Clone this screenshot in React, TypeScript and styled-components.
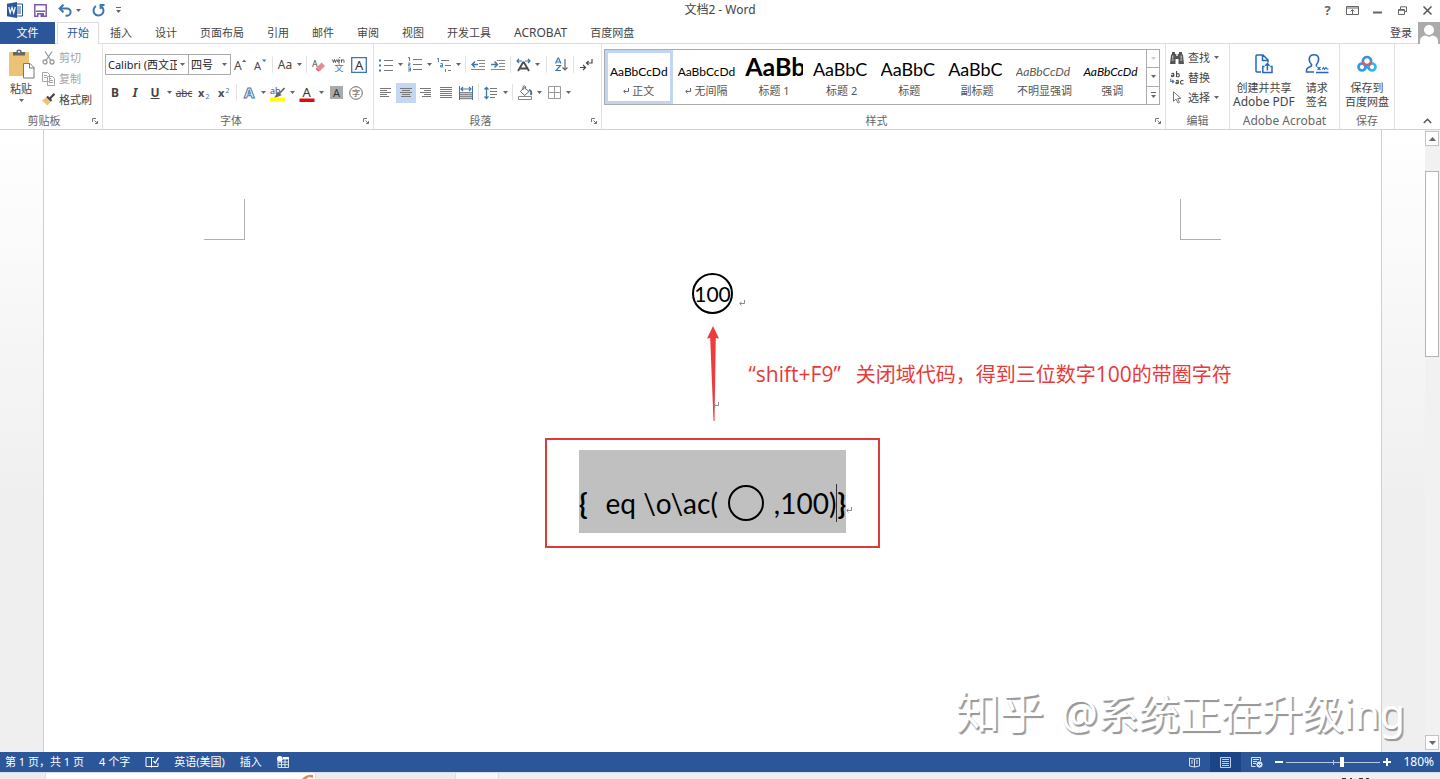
import React from 'react';
import styled, { createGlobalStyle, css } from 'styled-components';

const ui = '"Noto Sans", "Noto Sans CJK SC", sans-serif';
const calibri = 'Lato, "Noto Sans CJK SC", sans-serif';
const blue = '#2b579a';
const accent = '#3f76ad';
const ink = '#4a4a4a';

const GlobalStyle = createGlobalStyle`
  *, *::before, *::after { box-sizing: border-box; }
  body { margin: 0; background: #fff; font-family: ${ui}; font-size: 11px; line-height: 14px; color: #444; }
  button, select, input { font: inherit; color: inherit; margin: 0; }
  button { padding: 0; border: 0; background: none; white-space: nowrap; }
  svg { display: block; flex: none; }
`;

const Window = styled.div`
  min-height: 100vh;
  display: flex;
  flex-direction: column;
  overflow: hidden;
`;

/* ---------- title bar ---------- */

const TitleBar = styled.header`
  display: grid;
  grid-template-columns: 1fr auto 1fr;
  align-items: start;
  height: 22px;
`;

const QuickAccess = styled.div`
  display: flex;
  align-items: center;
  gap: 11px;
  padding-left: 7px;
  height: 20px;
`;

const QuickButton = styled.button`
  display: flex;
  align-items: center;
  gap: 4px;
  height: 18px;
`;

const Title = styled.h1`
  margin: 0;
  font-size: 12px;
  font-weight: 400;
  line-height: 20px;
`;

const WindowControls = styled.div`
  display: flex;
  justify-content: flex-end;
`;

const WindowButton = styled.button`
  width: 25px;
  height: 20px;
  display: flex;
  align-items: center;
  justify-content: center;
  font-size: 13px;
  font-weight: 700;
  color: #666;
`;

/* ---------- tabs ---------- */

const TabBar = styled.nav`
  display: flex;
  align-items: stretch;
  height: 22px;
  border-bottom: 1px solid #dcdcdc;
`;

const FileTab = styled.button`
  width: 55px;
  height: 22px;
  margin-right: 2px;
  background: ${blue};
  color: #fff;
`;

const Tab = styled.button<{ $active?: boolean; $latin?: boolean }>`
  padding: 0 11px;
  margin-right: 1px;
  height: 22px;
  font-size: ${p => (p.$latin ? 12 : 11)}px;
  ${p => p.$active && css`
    padding: 0 9px 2px;
    margin-right: 0;
    color: ${blue};
    background: #fff;
    border: 1px solid #dcdcdc;
    border-bottom: 0;
  `}
`;

const Account = styled.button`
  display: flex;
  align-items: center;
  gap: 6px;
  margin-left: auto;
  height: 22px;
`;

/* ---------- ribbon ---------- */

const Ribbon = styled.section`
  display: flex;
  height: 86px;
  border-bottom: 1px solid #d2d2d2;
`;

const Group = styled.section<{ $width?: number }>`
  ${p => (p.$width ? `flex: none; width: ${p.$width}px;` : 'flex: 1; min-width: 0;')}
  display: flex;
  flex-direction: column;
  padding-top: 3px;
  border-right: 1px solid #e3e3e3;
`;

const GroupBody = styled.div`
  flex: 1;
  display: flex;
  padding: 0 2px;
`;

const GroupFooter = styled.footer`
  display: flex;
  align-items: center;
  height: 16px;
  color: #666;
`;

const GroupName = styled.span<{ $latin?: boolean }>`
  flex: 1;
  text-align: center;
  font-size: ${p => (p.$latin ? 12 : 11)}px;
`;

const Launcher = styled.button`
  width: 14px;
  height: 14px;
  display: flex;
  align-items: center;
  justify-content: center;
`;

const ToolRows = styled.div`
  display: flex;
  flex-direction: column;
  gap: 7px;
  padding-top: 7px;
`;

const ToolRow = styled.div`
  display: flex;
  align-items: center;
  height: 21px;
`;

const Tool = styled.button<{ $active?: boolean; $bold?: boolean; $italic?: boolean; $line?: string }>`
  width: 20px;
  height: 20px;
  display: flex;
  align-items: center;
  justify-content: center;
  font-size: 12px;
  font-weight: ${p => (p.$bold ? 700 : 400)};
  font-style: ${p => (p.$italic ? 'italic' : 'normal')};
  text-decoration: ${p => p.$line || 'none'};
  background: ${p => (p.$active ? '#c5d6f2' : 'transparent')};
`;

const CaretButton = styled.button`
  width: 9px;
  height: 20px;
  display: flex;
  align-items: center;
  justify-content: center;
`;

const Separator = styled.span<{ $wide?: boolean }>`
  width: 1px;
  height: 17px;
  margin: 0 ${p => (p.$wide ? 4 : 2)}px;
  background: #e3e3e3;
`;

const Combo = styled.label<{ $width: number }>`
  position: relative;
  width: ${p => p.$width}px;
  height: 21px;
  margin-right: -1px;
  border: 1px solid #ababab;
  select {
    appearance: none;
    width: 100%;
    height: 19px;
    padding: 0 11px 0 2px;
    border: 0;
    background: #fff;
    color: #222;
    overflow: hidden;
  }
  svg {
    position: absolute;
    right: 3px;
    top: 8px;
    pointer-events: none;
  }
`;

const PasteButton = styled.button`
  width: 38px;
  display: flex;
  flex-direction: column;
  align-items: center;
  gap: 3px;
  padding-top: 2px;
`;

const CommandList = styled.div<{ $tight?: boolean }>`
  display: flex;
  flex-direction: column;
  gap: ${p => (p.$tight ? 5 : 6)}px;
  padding: 3px 0 0 2px;
`;

const Command = styled.button`
  display: flex;
  align-items: center;
  gap: 4px;
  height: 15px;
  &:disabled { color: #a3a3a3; }
`;

const CommandRow = styled.div`
  display: flex;
  align-items: center;
  gap: 2px;
  height: 15px;
`;

const BigButton = styled.button<{ $grow?: boolean }>`
  display: flex;
  flex-direction: column;
  align-items: center;
  padding: 7px 1px 0;
  margin-right: ${p => (p.$grow ? 0 : 8)}px;
  flex: ${p => (p.$grow ? 1 : 'none')};
`;

const BigLabel = styled.span<{ $latin?: boolean }>`
  font-size: ${p => (p.$latin ? 12 : 11)}px;
  line-height: 14px;
  &:first-of-type { margin-top: 7px; }
`;

const Gallery = styled.div`
  flex: 1;
  min-width: 0;
  display: flex;
  height: 56px;
  margin: 2px 3px 0 0;
  border: 1px solid #ababab;
`;

const StyleCard = styled.button<{ $selected?: boolean }>`
  flex: 1 1 0;
  min-width: 0;
  padding: ${p => (p.$selected ? 0 : 3)}px;
  border: ${p => (p.$selected ? '3px solid #c2d5f2' : '0')};
  display: flex;
  flex-direction: column;
  align-items: center;
`;

const Preview = styled.span`
  align-self: stretch;
  flex: none;
  height: 31px;
  margin: 0 2px;
  overflow: hidden;
  font: 24px/28px ${calibri};
  text-align: left;
  color: #000;
`;

const Sample = styled.span<{ $size: number; $bold?: boolean; $italic?: boolean; $color?: string }>`
  font-size: ${p => p.$size}px;
  line-height: 10px;
  font-weight: ${p => (p.$bold ? 700 : 400)};
  font-style: ${p => (p.$italic ? 'italic' : 'normal')};
  color: ${p => p.$color || '#000'};
`;

const StyleName = styled.span`
  display: flex;
  align-items: center;
  gap: 3px;
  color: #555;
`;

const GalleryNav = styled.div`
  width: 13px;
  display: flex;
  flex-direction: column;
  border-left: 1px solid #ababab;
`;

const GalleryButton = styled.button`
  flex: 1;
  display: flex;
  align-items: center;
  justify-content: center;
  & + & { border-top: 1px solid #ababab; }
`;

const RibbonEnd = styled.div`
  width: 45px;
  display: flex;
  align-items: flex-end;
  justify-content: flex-end;
  padding: 0 8px 5px 0;
`;

/* ---------- document ---------- */

const Workspace = styled.main`
  position: relative;
  flex: 1;
  display: flex;
  background: linear-gradient(#fff, #efefef 60%);
`;

const Page = styled.article`
  flex: 1;
  min-width: 0;
  margin: 0 43px;
  background: #fff;
  border: solid #cfcfcf;
  border-width: 0 1px;
  display: flex;
  flex-direction: column;
  align-items: center;
  font-family: ${calibri};
  color: #000;
`;

const MarginMarks = styled.div`
  align-self: stretch;
  display: flex;
  justify-content: space-between;
  padding: 69px 160px 33px;
`;

const MarginMark = styled.span<{ $side: 'left' | 'right' }>`
  width: 41px;
  height: 41px;
  border-bottom: 1px solid #b0b0b0;
  border-${p => (p.$side === 'left' ? 'right' : 'left')}: 1px solid #b0b0b0;
`;

const Enclosed = styled.p`
  position: relative;
  margin: 0;
  width: 41px;
  height: 41px;
  border: 2px solid #000;
  border-radius: 50%;
  display: flex;
  align-items: center;
  justify-content: center;
  font-size: 21px;
  line-height: 40px;
`;

const ReturnMark = styled.span<{ $left: number; $top: number }>`
  position: absolute;
  left: ${p => p.$left}px;
  top: ${p => p.$top}px;
`;

const Explanation = styled.div`
  align-self: stretch;
  display: grid;
  grid-template-columns: 1fr 12px 1fr;
  align-items: center;
  padding: 12px 0 17px;
`;

const ArrowHolder = styled.div`
  position: relative;
  grid-column: 2;
`;

const Note = styled.p`
  margin: 0;
  padding: 2px 0 0 30px;
  font: 20px/28px "Open Sans", "Noto Sans CJK SC", sans-serif;
  color: #e8393a;
  white-space: nowrap;
`;

const NoteLatin = styled.span`
  font-size: 21px;
`;

const NoteKeys = styled(NoteLatin)`
  margin-right: 15px;
`;

const RedFrame = styled.div`
  padding: 10px 32px 13px;
  border: 2px solid #dd3a3a;
`;

const FieldCode = styled.p`
  position: relative;
  margin: 0;
  width: 267px;
  height: 83px;
  background: #c0c0c0;
  display: flex;
  align-items: center;
  padding-top: 23px;
  font-size: 28px;
  line-height: 40px;
  white-space: pre;
`;

const Spread = styled.span`
  flex: 1;
  display: flex;
  align-items: center;
  justify-content: space-between;
  padding-left: 18px;
`;

const Ring = styled.span`
  width: 36px;
  height: 36px;
  border: 2px solid #000;
  border-radius: 50%;
`;

const TextCursor = styled.span`
  width: 1px;
  height: 38px;
  background: #333;
`;

const ScrollBar = styled.aside`
  width: 15px;
  display: flex;
  flex-direction: column;
  align-items: stretch;
  padding: 1px 1px 2px 0;
  background: #f1f1f1;
`;

const ScrollButton = styled.button`
  height: 15px;
  display: flex;
  align-items: center;
  justify-content: center;
  background: #fff;
  border: 1px solid #c4c4c4;
`;

const ScrollTrack = styled.div`
  flex: 1;
  padding-top: 25px;
`;

const ScrollThumb = styled.div`
  height: 33%;
  background: #fff;
  border: 1px solid #b4b4b4;
`;

const Watermark = styled.p`
  position: absolute;
  right: 35px;
  bottom: 10px;
  margin: 0;
  font: 41px/58px "Noto Sans", "Noto Sans CJK SC", sans-serif;
  color: #fff;
  text-shadow: 1px 2px 1px #999, 2px 2px 0 #b0b0b0;
  white-space: nowrap;
`;

const SiteName = styled.span`
  margin-right: 17px;
  font-size: 44px;
`;

/* ---------- status bar ---------- */

const StatusBar = styled.footer`
  display: flex;
  justify-content: space-between;
  align-items: center;
  height: 20px;
  background: ${blue};
  color: #fff;
`;

const StatusGroup = styled.div<{ $gap?: number }>`
  display: flex;
  align-items: center;
  gap: ${p => p.$gap || 0}px;
  padding: 0 6px 0 5px;
  height: 20px;
`;

const ViewButton = styled.button<{ $active?: boolean }>`
  width: 31px;
  height: 20px;
  display: flex;
  align-items: center;
  justify-content: center;
  background: ${p => (p.$active ? '#1c4587' : 'transparent')};
`;

const ZoomButton = styled.button`
  width: 14px;
  height: 20px;
  display: flex;
  align-items: center;
  justify-content: center;
`;

const ZoomSlider = styled.input`
  appearance: none;
  width: 94px;
  height: 12px;
  background:
    linear-gradient(#b9c9e2, #b9c9e2) center / 1px 5px no-repeat,
    linear-gradient(#b9c9e2, #b9c9e2) center / 100% 1px no-repeat;
  &::-webkit-slider-thumb {
    appearance: none;
    width: 4px;
    height: 10px;
    background: #fff;
  }
`;

const ZoomValue = styled.button`
  width: 40px;
  text-align: right;
  font-size: 12px;
`;

const DesktopEdge = styled.div`
  display: flex;
  height: 7px;
  overflow: hidden;
  background: #f0f0f0;
  border-top: 1px solid #d5deeb;
`;

const EdgePiece = styled.span<{ $width: number; $fill: string }>`
  flex: none;
  width: ${p => p.$width}px;
  background: ${p => p.$fill};
  border-right: 1px solid #ddd;
  display: flex;
  justify-content: flex-end;
`;

const EdgeClock = styled.span`
  margin-left: auto;
  padding: 5px 70px 0 0;
`;

/* ---------- drawings ---------- */

const Caret = ({ color = '#666' }: { color?: string }) => (
  <svg width="5" height="3" viewBox="0 0 5 3"><path d="M0 0h5L2.5 3z" fill={color} /></svg>
);
const More = () => (
  <svg width="5" height="6" viewBox="0 0 5 6"><path d="M0 0h5v1H0zM0 3h5L2.5 6z" fill="#666" /></svg>
);
const Return = ({ color = '#666' }: { color?: string }) => (
  <svg width="6" height="6" viewBox="0 0 6 6" fill="none" stroke={color}><path d="M5.5 0v3.5H1M2.5 1.7L.7 3.5l1.8 1.8" /></svg>
);
const LauncherIcon = () => (
  <svg width="6" height="6" viewBox="0 0 6 6" fill="none" stroke="#777"><path d="M.5 4V.5H4M2.5 2.5l3 3M5.5 3v2.5H3" /></svg>
);
const WordIcon = () => (
  <svg width="16" height="16" viewBox="0 0 16 16">
    <path d="M8 2h7.5v12H8z" fill="#fff" stroke={blue} />
    <path d="M9 5h5M9 7h5M9 9h5M9 11h5" stroke={blue} />
    <path d="M0 1.8L10 0v16L0 14.2z" fill={blue} />
    <path d="M1.8 5l1.4 6L5 5.4 6.7 11 8.2 5" fill="none" stroke="#fff" strokeWidth="1.2" />
  </svg>
);
const SaveIcon = () => (
  <svg width="13" height="13" viewBox="0 0 13 13">
    <path d="M.8.8h11.4v11.4H.8z" fill="#fff" stroke="#7d57a8" strokeWidth="1.5" />
    <path d="M2 6.5h9V8H2zM3 9h7v4H3z" fill="#7d57a8" /><path d="M4.5 10.5h2V13h-2z" fill="#fff" />
  </svg>
);
const UndoIcon = () => (
  <svg width="14" height="13" viewBox="0 0 14 13" fill="none" stroke={accent} strokeWidth="2">
    <path d="M2 4.5h7a3.6 3.6 0 0 1 0 7.2H7.5M5.5.8L1.6 4.5l3.9 3.7" />
  </svg>
);
const RedoIcon = () => (
  <svg width="13" height="13" viewBox="0 0 13 13" fill="none" stroke={accent} strokeWidth="2">
    <path d="M4 2.2A5 5 0 1 0 9.6 2.6M12.5 1H8.6v4" />
  </svg>
);
const RibbonOptionsIcon = () => (
  <svg width="13" height="9" viewBox="0 0 13 9" fill="none" stroke="#666"><path d="M.5.5h12v8H.5zM.5 2h12M6.5 8V4M4.5 5.5l2-2 2 2" /></svg>
);
const MinimizeIcon = () => <svg width="9" height="8" viewBox="0 0 9 8"><path d="M0 5.5h9v2H0z" fill="#666" /></svg>;
const RestoreIcon = () => (
  <svg width="9" height="9" viewBox="0 0 9 9" fill="none" stroke="#666"><path d="M.5 3.5h6v5h-6zM.5 4.3h6M2.5 3V.8h6v4.7H7" /></svg>
);
const CloseIcon = () => (
  <svg width="9" height="9" viewBox="0 0 9 9" stroke="#555" strokeWidth="1.5"><path d="M.5.5l8 8M8.5.5l-8 8" /></svg>
);
const AvatarIcon = () => (
  <svg width="22" height="22" viewBox="0 0 22 22">
    <path d="M0 0h22v22H0z" fill="#ababab" /><circle cx="11" cy="8" r="5" fill="#fff" />
    <path d="M2 22v-3q0-5 6-5.5l3 1.5 3-1.5q6 .5 6 5.5v3z" fill="#fff" />
  </svg>
);
const PasteIcon = () => (
  <svg width="27" height="30" viewBox="0 0 27 30">
    <rect x="1" y="3" width="20" height="24" rx="1" fill="#ecc277" />
    <path d="M5 3h3.5V1.500q2.500-2 5 0V3H17v3.500H5z" fill="#666" /><circle cx="11" cy="2.700" r="1" fill="#fff" />
    <path d="M15.500 14.500h6.500l4 4V29H15.500z" fill="#fff" stroke="#777" /><path d="M21.500 14.500v4.500H26" fill="none" stroke="#777" />
  </svg>
);
const CutIcon = () => (
  <svg width="13" height="14" viewBox="0 0 13 14" fill="none" stroke="#9a9a9a" strokeWidth="1.300">
    <path d="M3 .5l6 9M10 .5l-6 9" /><circle cx="3" cy="11" r="2" /><circle cx="10" cy="11" r="2" />
  </svg>
);
const CopyIcon = () => (
  <svg width="13" height="14" viewBox="0 0 13 14" fill="#fff" stroke="#a5a5a5">
    <path d="M.5.500h5l2 2v7h-7zM5.500 4.500h5l2 2v7h-7z" /><path d="M2 3.500h3M2 5.500h2.500M7 8.500h4M7 10.500h4M7 6.500h2" />
  </svg>
);
const BrushIcon = () => (
  <svg width="13" height="13" viewBox="0 0 13 13">
    <path d="M4 4.500l4.500 4.500-3 3.500L0 7.500z" fill="#ecc277" /><path d="M5 3.500l4.500 4.500M7.500 6L12.500.8" stroke="#444" strokeWidth="2.200" fill="none" />
  </svg>
);
const SizeIcon = ({ up }: { up?: boolean }) => (
  <svg width="14" height="14" viewBox="0 0 14 14">
    <text x="1" y="12" fontFamily="Noto Sans" fontSize={up ? 12 : 11} fill={ink}>A</text>
    <path d={up ? 'M9 4h4.400L11.200 1.500z' : 'M9 1.500h4.400L11.200 4z'} fill={accent} />
  </svg>
);
const EraserIcon = () => (
  <svg width="14" height="15" viewBox="0 0 14 15">
    <text x="0" y="10" fontFamily="Noto Sans" fontSize="9" fill={ink}>A</text>
    <path d="M9.500 5.500L13 9l-5 5-3.500-3.500z" fill="#e58b98" /><path d="M4.500 10.500L8 14l-1.500.500-2.500-2z" fill="#c9606f" />
  </svg>
);
const PhoneticIcon = () => (
  <svg width="14" height="16" viewBox="0 0 14 16">
    <path d="M.5 2.500l1 3 1-3 1 3 1-3M5.500 4h2.500q-.300-1.500-1.300-1.500-1.200.200-1.200 1.500 0 1.500 2.300 1.300M7 1.300L8 .2M9.500 5.800V2.500M9.500 3.300q2.500-1.500 2.500.500v2" fill="none" stroke={ink} strokeWidth=".900" />
    <text x="2.500" y="14" fontFamily="Noto Sans CJK SC" fontSize="9" fill={accent}>文</text>
  </svg>
);
const BorderedAIcon = () => (
  <svg width="16" height="16" viewBox="0 0 16 16">
    <path d="M.7.7h14.600v14.600H.7z" fill="none" stroke={accent} strokeWidth="1.300" />
    <text x="4" y="12.500" fontFamily="Noto Sans" fontSize="13" fill="#333">A</text>
  </svg>
);
const ScriptIcon = ({ up }: { up?: boolean }) => (
  <svg width="14" height="14" viewBox="0 0 14 14">
    <text x="1" y="11" fontFamily="Noto Sans" fontWeight="700" fontSize="11" fill={ink}>x</text>
    <text x="8.500" y={up ? 7 : 13} fontFamily="Noto Sans" fontSize="7" fill={accent}>2</text>
  </svg>
);
const EffectIcon = () => (
  <svg width="14" height="15" viewBox="0 0 14 15">
    <text x="2" y="12.500" fontFamily="Noto Sans" fontSize="15" fontWeight="700" fill="#fff" stroke={accent} strokeWidth="1">A</text>
  </svg>
);
const HighlightIcon = () => (
  <svg width="16" height="16" viewBox="0 0 16 16">
    <text x="0" y="9" fontFamily="Noto Sans" fontSize="9" fill={ink}>ab</text>
    <path d="M14.500 3L8.500 9.500M8 8l2 2-4 1.500z" stroke="#666" strokeWidth="1.800" fill="#666" /><path d="M0 12.500h15V16H0z" fill="#ff0" />
  </svg>
);
const FontColorIcon = () => (
  <svg width="16" height="18" viewBox="0 -2 16 18">
    <text x="3.500" y="10.500" fontFamily="Noto Sans" fontSize="13" fill="#333">A</text><path d="M.5 12.500h15V16H.5z" fill="#e00b0b" />
  </svg>
);
const ShadeIcon = () => (
  <svg width="13" height="13" viewBox="0 0 13 13">
    <path d="M0 0h13v13H0z" fill="#aaa" /><text x="3" y="10.500" fontFamily="Noto Sans" fontSize="11" fill="#333">A</text>
  </svg>
);
const EncloseIcon = () => (
  <svg width="14" height="14" viewBox="0 0 14 14">
    <circle cx="7" cy="7" r="6.300" fill="none" stroke="#666" /><text x="3" y="10" fontFamily="Noto Sans CJK SC" fontSize="8" fill={ink}>字</text>
  </svg>
);
const BulletsIcon = () => (
  <svg width="14" height="14" viewBox="0 0 14 14">
    <path d="M5 2.500h9M5 7.500h9M5 12.500h9" stroke="#777" />
    <path d="M0 1.500h2v2H0zM0 6.500h2v2H0zM0 11.500h2v2H0z" fill={accent} />
  </svg>
);
const NumberingIcon = () => (
  <svg width="14" height="15" viewBox="0 0 14 15">
    <path d="M5 2.500h9M5 7.500h9M5 12.500h9" stroke="#777" />
    <path d="M0 1l1.500-.8V4M0 6h2v1.500H.5V9H2.500M0 11h2.500v3H0M.5 12.500h2" fill="none" stroke={accent} strokeWidth=".900" />
  </svg>
);
const MultilevelIcon = () => (
  <svg width="14" height="14" viewBox="0 0 14 14">
    <path d="M4 2.500h8M8 7.500h6M11 12.500h3" stroke="#777" />
    <path d="M0 1l1.500-.8V4M3.500 5.500h2v3.500h-2V7.300h2M8.500 11v3" fill="none" stroke={accent} strokeWidth=".900" />
  </svg>
);
const IndentIcon = ({ out }: { out?: boolean }) => (
  <svg width="14" height="11" viewBox="0 0 14 11">
    <path d="M6 1.500h8M8 4.500h6M8 7.500h6M0 10.500h14" stroke="#888" />
    <path d={out ? 'M7 5.500H2M4 2.500l-3 3 3 3' : 'M0 5.500h5.500M3.500 2.500l3 3-3 3'} fill="none" stroke={accent} strokeWidth="1.500" />
  </svg>
);
const AsianLayoutIcon = () => (
  <svg width="15" height="14" viewBox="0 0 15 14">
    <path d="M1 3h5M3 1L1 3l2 2M14 3H9M12 1l2 2-2 2" fill="none" stroke={accent} strokeWidth="1.200" />
    <path d="M2 13L7 4.500h1L13 13M4 10.500h7" fill="none" stroke={ink} strokeWidth="1.800" />
  </svg>
);
const SortIcon = () => (
  <svg width="13" height="15" viewBox="0 0 13 15" fill="none">
    <path d="M.5 6.500L3 1h.500L6 6.500M1.500 5h3.500M1 8.500h4.500L1 13.500h5" stroke={accent} strokeWidth="1.200" />
    <path d="M10 2v11M7.500 10.500L10 13l2.500-2.500" stroke="#666" strokeWidth="1.200" />
  </svg>
);
const MarksIcon = () => (
  <svg width="13" height="12" viewBox="0 0 13 12" fill="none" stroke={ink} strokeWidth="1.200">
    <path d="M12 0v4H6.500M8.500 2l-2 2 2 2M0 8.500h5M3 6l2.500 2.500L3 11" />
  </svg>
);
const AlignIcon = ({ kind }: { kind: 'left' | 'center' | 'right' | 'justify' }) => {
  const d = {
    left: 'M0 1.500h11M0 3.500h7M0 5.500h11M0 7.500h7M0 9.500h9',
    center: 'M0 1.500h12M2 3.500h8M0 5.500h12M2 7.500h8M1 9.500h10',
    right: 'M0 1.500h11M4 3.500h7M0 5.500h11M4 7.500h7M2 9.500h9',
    justify: 'M0 .500h12M0 2.500h12M0 4.500h12M0 6.500h12M0 8.500h12M0 10.500h12',
  }[kind];
  return <svg width="12" height="11" viewBox="0 0 12 11" stroke="#777"><path d={d} /></svg>;
};
const DistributeIcon = () => (
  <svg width="14" height="14" viewBox="0 0 14 14" fill="none">
    <path d="M1 6.500h12v7H1z" fill="#c8c8c8" />
    <path d="M.5 0v14M13.500 0v14" stroke={accent} /><path d="M1 6.500h12M1 8.500h12M1 10.500h12M1 12.500h12" stroke="#888" />
    <path d="M2 3h10M4 1L2 3l2 2M10 1l2 2-2 2" stroke={accent} strokeWidth="1.200" />
  </svg>
);
const SpacingIcon = () => (
  <svg width="14" height="14" viewBox="0 0 14 14" fill="none">
    <path d="M2.500 1v12M.5 3.500l2-2 2 2M.5 10.500l2 2 2-2" stroke={accent} strokeWidth="1.300" />
    <path d="M6 2.500h7M6 5.500h7M6 8.500h7M6 11.500h5" stroke="#777" />
  </svg>
);
const FillIcon = () => (
  <svg width="15" height="15" viewBox="0 0 15 15" fill="none">
    <path d="M6 2.500L11 6.500 6.500 10.500 2.500 6.500zM5 5V1.500q1.500-1.500 2.500 0V4" stroke="#666" />
    <path d="M11 5q3 .5 2 5" stroke={accent} strokeWidth="2" /><path d="M.5 11.500h13v3H.5z" stroke="#888" />
  </svg>
);
const BordersIcon = () => (
  <svg width="13" height="13" viewBox="0 0 13 13" fill="none" stroke="#999"><path d="M.5.500h12v12H.500zM6.500 1v11M1 6.500h11" /></svg>
);
const FindIcon = () => (
  <svg width="14" height="12" viewBox="0 0 14 12">
    <path d="M2 0h3v2h1.300v2h1.400V2H9V0h3v2l1 1 1 9H8.500V7h-3v5H0l1-9 1-1z" fill="#555" />
    <path d="M1.800 8h2M10.200 8h2M2.800 3.500v3M11.200 3.500v3" stroke="#fff" strokeWidth=".8" />
  </svg>
);
const ReplaceIcon = () => (
  <svg width="14" height="14" viewBox="0 0 14 14" fill="none" stroke={ink} strokeWidth="1.100">
    <path d="M1.500 2.700q2.300-1 2.300.6v2.500M3.800 4q-2.600 0-2.400 1.100.6 1.200 2.400-.1M6.500 0v6M6.500 3q2.800-1.200 2.800 1.200 0 2.300-2.800 1.200" />
    <path d="M6 9.700q2.300-1 2.300.6v2.500M8.300 11q-2.600 0-2.400 1.100.6 1.200 2.400-.1M13.500 9.800q-3-1-3 1.500t3 1.400" />
    <path d="M.8 7.500v3H3.500M2.300 9l1.500 1.500L2.300 12" stroke={accent} />
  </svg>
);
const SelectIcon = () => (
  <svg width="14" height="13" viewBox="0 0 14 13"><path d="M3.500.8v9.500L6 8l2 4 1.500-.8L7.700 7.500H11z" fill="#fff" stroke="#777" /></svg>
);
const PdfIcon = () => (
  <svg width="20" height="20" viewBox="0 0 20 20" fill="none" stroke="#2468bd" strokeWidth="1.500">
    <path d="M7 18H2.800Q2 18 2 17V2q0-1 1-1h6l5 5v2.500M8.500 1v5.500H14M10.500 12.500H8.800v6H18v-6h-1.700M13.400 16.500V10M11.200 11.700l2.200-2.200 2.200 2.200" />
  </svg>
);
const SignIcon = () => (
  <svg width="24" height="20" viewBox="0 0 24 20" fill="none" stroke="#2468bd" strokeWidth="1.600">
    <path d="M9 18H1.500q-.5-4 3.500-5.200 2-.8 1.500-2.300Q4 8 4.200 5 4.700.8 9 .8T13.700 5q0 3-2.200 5.500-.5 1 .5 2M11 18.500h12.500" />
    <path d="M12.500 13l3 3M15.500 13l-3 3M17 15.500l1.500-2 1 2 1.500-2 1 1.500h1.500" strokeWidth="1.100" />
  </svg>
);
const NetdiskIcon = () => (
  <svg width="20" height="20" viewBox="0 0 20 20" fill="none" strokeWidth="2.700">
    <circle cx="5" cy="13" r="3.500" stroke="#2e9be6" /><circle cx="15" cy="13" r="3.500" stroke="#35b8ea" />
    <path d="M6 8.500a4.200 4.200 0 1 1 8 0" stroke="#3c8fe0" /><path d="M6 8a4.100 4.100 0 0 0 8 0" stroke="#e9525f" />
    <path d="M8 11l5 4.500M12 11l-5 4.500" stroke="#2f9fe8" strokeWidth="2" />
  </svg>
);
const CollapseIcon = () => (
  <svg width="9" height="6" viewBox="0 0 9 6" fill="none" stroke="#555" strokeWidth="1.500"><path d="M.8 5l3.700-3.700L8.200 5" /></svg>
);
const ArrowDrawing = () => (
  <svg width="12" height="95" viewBox="0 0 12 95"><path d="M6 0L0 12.500l3.200-.5L6.500 95h1L8.800 12l3.200.5z" fill="#ee3b3d" /></svg>
);
const ProofIcon = () => (
  <svg width="14" height="12" viewBox="0 0 14 12" fill="none" stroke="#fff">
    <path d="M6.500 1.500v10M6.500 1.500H1v9h12V7M6.500 1.500H9" /><path d="M8.500 5l1.800 2L13.500 1.500" strokeWidth="1.300" />
  </svg>
);
const MacroIcon = () => (
  <svg width="12" height="12" viewBox="0 0 12 12">
    <path d="M1 3h10.500v8.500H1zM1 6h10.500M1 8.700h10.500M4.500 3v8.500M8 3v8.500" fill="none" stroke="#dbe4f2" /><circle cx="2.800" cy="2.800" r="2.800" fill="#fff" /><path d="M6 1h6v2H6z" fill="#fff" />
  </svg>
);
const ReadIcon = () => (
  <svg width="11" height="11" viewBox="0 0 11 11" fill="none" stroke="#dbe4f2"><path d="M.5 1l5 1 5-1v8l-5 1-5-1zM5.500 2v8M2 4h2M2 6h2M7 4h2M7 6h2" /></svg>
);
const PrintIcon = () => (
  <svg width="11" height="11" viewBox="0 0 11 11" fill="none" stroke="#c3d0e4"><path d="M.5.500h10v10H.500zM2 2.500h7M2 4.500h7M2 6.500h7M2 8.500h7" /></svg>
);
const WebIcon = () => (
  <svg width="12" height="11" viewBox="0 0 12 11" fill="none" stroke="#dbe4f2">
    <path d="M4.500 9.500h-4v-9h9V4M2 2.500h6M2 4.500h4M2 6.500h3" /><circle cx="8.500" cy="7.500" r="2.700" fill="#dbe4f2" /><path d="M7 7l1.500 1.500L10 7" stroke={blue} />
  </svg>
);

const Dropdown = ({ label }: { label: string }) => (
  <CaretButton aria-label={label}><Caret /></CaretButton>
);

const styles = [
  { name: '正文', text: 'AaBbCcDd', size: 12, mark: true, selected: true },
  { name: '无间隔', text: 'AaBbCcDd', size: 12, mark: true },
  { name: '标题 1', text: 'AaBb', size: 25, bold: true },
  { name: '标题 2', text: 'AaBbC', size: 18 },
  { name: '标题', text: 'AaBbC', size: 18 },
  { name: '副标题', text: 'AaBbC', size: 18 },
  { name: '不明显强调', text: 'AaBbCcDd', size: 12, italic: true, color: '#5a5a5a' },
  { name: '强调', text: 'AaBbCcDd', size: 12, italic: true },
];

const tabs = ['开始', '插入', '设计', '页面布局', '引用', '邮件', '审阅', '视图', '开发工具', 'ACROBAT', '百度网盘'];

export default function App() {
  return (
    <Window>
      <GlobalStyle />
      <TitleBar>
        <QuickAccess>
          <WordIcon />
          <QuickButton aria-label="保存"><SaveIcon /></QuickButton>
          <QuickButton aria-label="撤消"><UndoIcon /><Caret /></QuickButton>
          <QuickButton aria-label="重复"><RedoIcon /></QuickButton>
          <QuickButton aria-label="自定义快速访问工具栏"><More /></QuickButton>
        </QuickAccess>
        <Title>文档2 - Word</Title>
        <WindowControls>
          <WindowButton>?</WindowButton>
          <WindowButton aria-label="功能区显示选项"><RibbonOptionsIcon /></WindowButton>
          <WindowButton aria-label="最小化"><MinimizeIcon /></WindowButton>
          <WindowButton aria-label="向下还原"><RestoreIcon /></WindowButton>
          <WindowButton aria-label="关闭"><CloseIcon /></WindowButton>
        </WindowControls>
      </TitleBar>

      <TabBar>
        <FileTab>文件</FileTab>
        {tabs.map((t, i) => <Tab key={t} $active={i === 0} $latin={t === 'ACROBAT'}>{t}</Tab>)}
        <Account>登录<AvatarIcon /></Account>
      </TabBar>

      <Ribbon>
        <Group $width={103}>
          <GroupBody>
            <PasteButton><PasteIcon /><span>粘贴</span><Caret /></PasteButton>
            <CommandList>
              <Command disabled><CutIcon />剪切</Command>
              <Command disabled><CopyIcon />复制</Command>
              <Command><BrushIcon />格式刷</Command>
            </CommandList>
          </GroupBody>
          <GroupFooter><GroupName>剪贴板</GroupName><Launcher aria-label="剪贴板选项"><LauncherIcon /></Launcher></GroupFooter>
        </Group>

        <Group $width={271}>
          <GroupBody>
            <ToolRows>
              <ToolRow>
                <Combo $width={84}>
                  <select aria-label="字体"><option>Calibri (西文正文)</option></select><Caret />
                </Combo>
                <Combo $width={43}>
                  <select aria-label="字号"><option>四号</option></select><Caret />
                </Combo>
                <Tool aria-label="增大字号"><SizeIcon up /></Tool>
                <Tool aria-label="减小字号"><SizeIcon /></Tool>
                <Separator />
                <Tool>Aa</Tool><Dropdown label="更改大小写" />
                <Separator />
                <Tool aria-label="清除格式"><EraserIcon /></Tool>
                <Tool aria-label="拼音指南"><PhoneticIcon /></Tool>
                <Tool aria-label="字符边框"><BorderedAIcon /></Tool>
              </ToolRow>
              <ToolRow>
                <Tool $bold>B</Tool>
                <Tool $bold $italic>I</Tool>
                <Tool $bold $line="underline">U</Tool><Dropdown label="下划线" />
                <Tool $line="line-through"><small>abc</small></Tool>
                <Tool aria-label="下标"><ScriptIcon /></Tool>
                <Tool aria-label="上标"><ScriptIcon up /></Tool>
                <Separator />
                <Tool aria-label="文本效果"><EffectIcon /></Tool><Dropdown label="文本效果选项" />
                <Tool aria-label="突出显示"><HighlightIcon /></Tool><Dropdown label="突出显示颜色" />
                <Tool aria-label="字体颜色"><FontColorIcon /></Tool><Dropdown label="字体颜色选项" />
                <Tool aria-label="字符底纹"><ShadeIcon /></Tool>
                <Tool aria-label="带圈字符"><EncloseIcon /></Tool>
              </ToolRow>
            </ToolRows>
          </GroupBody>
          <GroupFooter><GroupName>字体</GroupName><Launcher aria-label="字体选项"><LauncherIcon /></Launcher></GroupFooter>
        </Group>

        <Group $width={228}>
          <GroupBody>
            <ToolRows>
              <ToolRow>
                <Tool aria-label="项目符号"><BulletsIcon /></Tool><Dropdown label="项目符号库" />
                <Tool aria-label="编号"><NumberingIcon /></Tool><Dropdown label="编号库" />
                <Tool aria-label="多级列表"><MultilevelIcon /></Tool><Dropdown label="列表库" />
                <Separator />
                <Tool aria-label="减少缩进量"><IndentIcon out /></Tool>
                <Tool aria-label="增加缩进量"><IndentIcon /></Tool>
                <Separator />
                <Tool aria-label="中文版式"><AsianLayoutIcon /></Tool><Dropdown label="中文版式选项" />
                <Separator $wide />
                <Tool aria-label="排序"><SortIcon /></Tool>
                <Separator />
                <Tool aria-label="显示编辑标记"><MarksIcon /></Tool>
              </ToolRow>
              <ToolRow>
                <Tool aria-label="左对齐"><AlignIcon kind="left" /></Tool>
                <Tool aria-label="居中" $active><AlignIcon kind="center" /></Tool>
                <Tool aria-label="右对齐"><AlignIcon kind="right" /></Tool>
                <Tool aria-label="两端对齐"><AlignIcon kind="justify" /></Tool>
                <Tool aria-label="分散对齐"><DistributeIcon /></Tool>
                <Separator />
                <Tool aria-label="行距"><SpacingIcon /></Tool><Dropdown label="行距选项" />
                <Separator />
                <Tool aria-label="底纹"><FillIcon /></Tool><Dropdown label="底纹颜色" />
                <Tool aria-label="边框"><BordersIcon /></Tool><Dropdown label="边框选项" />
              </ToolRow>
            </ToolRows>
          </GroupBody>
          <GroupFooter><GroupName>段落</GroupName><Launcher aria-label="段落设置"><LauncherIcon /></Launcher></GroupFooter>
        </Group>

        <Group>
          <GroupBody>
            <Gallery>
              {styles.map(s => (
                <StyleCard key={s.name} $selected={s.selected}>
                  <Preview><Sample $size={s.size} $bold={s.bold} $italic={s.italic} $color={s.color}>{s.text}</Sample></Preview>
                  <StyleName>{s.mark && <Return />}{s.name}</StyleName>
                </StyleCard>
              ))}
              <GalleryNav>
                <GalleryButton aria-label="上一行" disabled><Caret color="#ccc" /></GalleryButton>
                <GalleryButton aria-label="下一行"><Caret /></GalleryButton>
                <GalleryButton aria-label="其他"><More /></GalleryButton>
              </GalleryNav>
            </Gallery>
          </GroupBody>
          <GroupFooter><GroupName>样式</GroupName><Launcher aria-label="样式窗格"><LauncherIcon /></Launcher></GroupFooter>
        </Group>

        <Group $width={64}>
          <GroupBody>
            <CommandList $tight>
              <CommandRow><Command><FindIcon />查找</Command><Dropdown label="查找选项" /></CommandRow>
              <Command><ReplaceIcon />替换</Command>
              <Command><SelectIcon />选择<Caret /></Command>
            </CommandList>
          </GroupBody>
          <GroupFooter><GroupName>编辑</GroupName></GroupFooter>
        </Group>

        <Group $width={110}>
          <GroupBody>
            <BigButton><PdfIcon /><BigLabel>创建并共享</BigLabel><BigLabel $latin>Adobe PDF</BigLabel></BigButton>
            <BigButton><SignIcon /><BigLabel>请求</BigLabel><BigLabel>签名</BigLabel></BigButton>
          </GroupBody>
          <GroupFooter><GroupName $latin>Adobe Acrobat</GroupName></GroupFooter>
        </Group>

        <Group $width={55}>
          <GroupBody>
            <BigButton $grow><NetdiskIcon /><BigLabel>保存到</BigLabel><BigLabel>百度网盘</BigLabel></BigButton>
          </GroupBody>
          <GroupFooter><GroupName>保存</GroupName></GroupFooter>
        </Group>

        <RibbonEnd><button aria-label="折叠功能区"><CollapseIcon /></button></RibbonEnd>
      </Ribbon>

      <Workspace>
        <Page>
          <MarginMarks><MarginMark $side="left" /><MarginMark $side="right" /></MarginMarks>
          <Enclosed>100<ReturnMark $left={45} $top={25}><Return color="#888" /></ReturnMark></Enclosed>
          <Explanation>
            <ArrowHolder><ArrowDrawing /><ReturnMark $left={6} $top={76}><Return color="#888" /></ReturnMark></ArrowHolder>
            <Note><NoteKeys>“shift+F9”</NoteKeys>关闭域代码，得到三位数字<NoteLatin>100</NoteLatin>的带圈字符</Note>
          </Explanation>
          <RedFrame>
            <FieldCode>
              <b>{'{'}</b>
              <Spread><span>eq \o\ac(</span><Ring /><span>,100)</span></Spread>
              <TextCursor />
              <b>{'}'}</b>
              <ReturnMark $left={267} $top={57}><Return color="#888" /></ReturnMark>
            </FieldCode>
          </RedFrame>
        </Page>
        <ScrollBar>
          <ScrollButton aria-label="向上滚动"><svg width="7" height="4" viewBox="0 0 7 4"><path d="M0 4h7L3.500 0z" fill="#666" /></svg></ScrollButton>
          <ScrollTrack><ScrollThumb /></ScrollTrack>
          <ScrollButton aria-label="向下滚动"><svg width="7" height="4" viewBox="0 0 7 4"><path d="M0 0h7L3.500 4z" fill="#666" /></svg></ScrollButton>
        </ScrollBar>
        <Watermark><SiteName>知乎</SiteName>@系统正在升级ing</Watermark>
      </Workspace>

      <StatusBar>
        <StatusGroup $gap={15}>
          <span>第 1 页，共 1 页</span>
          <span>4 个字</span>
          <ProofIcon />
          <span>英语(美国)</span>
          <span>插入</span>
          <MacroIcon />
        </StatusGroup>
        <StatusGroup>
          <ViewButton aria-label="阅读视图"><ReadIcon /></ViewButton>
          <ViewButton aria-label="页面视图" $active><PrintIcon /></ViewButton>
          <ViewButton aria-label="Web 版式视图"><WebIcon /></ViewButton>
          <ZoomButton aria-label="缩小"><svg width="8" height="8" viewBox="0 0 8 8"><path d="M0 3h8v2H0z" fill="#fff" /></svg></ZoomButton>
          <ZoomSlider type="range" aria-label="显示比例" min={0} max={100} defaultValue={60} />
          <ZoomButton aria-label="放大"><svg width="8" height="8" viewBox="0 0 8 8"><path d="M0 3h8v2H0zM3 0h2v8H3z" fill="#fff" /></svg></ZoomButton>
          <ZoomValue>180%</ZoomValue>
        </StatusGroup>
      </StatusBar>

      <DesktopEdge>
        <EdgePiece $width={46} $fill="#ececec" />
        <EdgePiece $width={270} $fill="#fff">
          <svg width="14" height="6" viewBox="0 0 14 6"><path d="M1 6Q6 1 12 2v3L8 4 5 6z" fill="#dd8c55" /></svg>
        </EdgePiece>
        <EdgePiece $width={140} $fill="#ececec" />
        <EdgePiece $width={43} $fill="#f7f7f7" />
        <EdgeClock><svg width="29" height="2" viewBox="0 0 29 2"><path d="M1 .5h4M9 .5h2M18 .5h4M25 .5h3" stroke="#333" /></svg></EdgeClock>
      </DesktopEdge>
    </Window>
  );
}
